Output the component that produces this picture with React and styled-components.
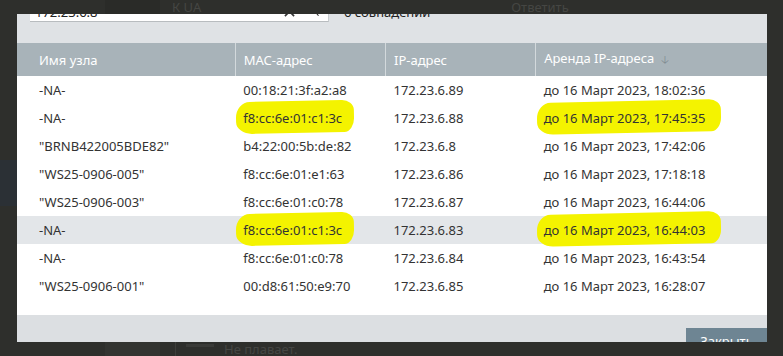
import React from "react";
import styled, { createGlobalStyle } from "styled-components";

const Global = createGlobalStyle`
  html, body { margin: 0; padding: 0; background: #2e2f2c; }
  body { font-family: "Noto Sans", "Open Sans", sans-serif; }
`;

const rows = [
  { name: "-NA-", mac: "00:18:21:3f:a2:a8", ip: "172.23.6.89", lease: "до 16 Март 2023, 18:02:36" },
  { name: "-NA-", mac: "f8:cc:6e:01:c1:3c", ip: "172.23.6.88", lease: "до 16 Март 2023, 17:45:35", marked: true },
  { name: "\"BRNB422005BDE82\"", mac: "b4:22:00:5b:de:82", ip: "172.23.6.8", lease: "до 16 Март 2023, 17:42:06" },
  { name: "\"WS25-0906-005\"", mac: "f8:cc:6e:01:e1:63", ip: "172.23.6.86", lease: "до 16 Март 2023, 17:18:18" },
  { name: "\"WS25-0906-003\"", mac: "f8:cc:6e:01:c0:78", ip: "172.23.6.87", lease: "до 16 Март 2023, 16:44:06" },
  { name: "-NA-", mac: "f8:cc:6e:01:c1:3c", ip: "172.23.6.83", lease: "до 16 Март 2023, 16:44:03", marked: true, active: true },
  { name: "-NA-", mac: "f8:cc:6e:01:c0:78", ip: "172.23.6.84", lease: "до 16 Март 2023, 16:43:54" },
  { name: "\"WS25-0906-001\"", mac: "00:d8:61:50:e9:70", ip: "172.23.6.85", lease: "до 16 Март 2023, 16:28:07" },
];

export default function App() {
  return (
    <>
      <Global />
      <Page>
        <TopStrip>
          <GhostBlock $left={105} />
          <GhostText $left={12}>К UA</GhostText>
          <GhostText $left={310}>Ответить</GhostText>
        </TopStrip>
        <Middle>
          <Gutter>
            <GutterPanel />
          </Gutter>
          <Modal>
            <Toolbar>
              <Search>
                <SearchText>172.23.6.8</SearchText>
                <ClearIcon viewBox="0 0 12 12">
                  <path d="M1 1 L11 11 M11 1 L1 11" stroke="#333" strokeWidth="1.8" />
                </ClearIcon>
                <PrevIcon viewBox="0 0 8 12">
                  <path d="M6 1 L2 6 L6 11" stroke="#333" strokeWidth="1.5" fill="none" />
                </PrevIcon>
              </Search>
              <Matches>6 совпадений</Matches>
            </Toolbar>
            <Table>
              <thead>
                <tr>
                  <Th $first>Имя узла</Th>
                  <Th>MAC-адрес</Th>
                  <Th>IP-адрес</Th>
                  <Th $last>
                    Аренда IP-адреса <SortArrow>🡣</SortArrow>
                  </Th>
                </tr>
              </thead>
              <tbody>
                {rows.map((r, i) => (
                  <Tr key={i} $active={r.active}>
                    <Td $first>{r.name}</Td>
                    <Td>{r.marked ? <Mark $w={118}>{r.mac}</Mark> : r.mac}</Td>
                    <Td>{r.ip}</Td>
                    <Td>{r.marked ? <Mark $w={184}>{r.lease}</Mark> : r.lease}</Td>
                  </Tr>
                ))}
              </tbody>
            </Table>
            <Spacer />
            <Footer>
              <CloseButton>Закрыть</CloseButton>
            </Footer>
          </Modal>
          <Gutter />
        </Middle>
        <BottomStrip>
          <GhostBlock $left={105} $dark />
          <Divider />
          <GhostLine />
          <GhostText $left={0}>Не плавает.</GhostText>
        </BottomStrip>
      </Page>
    </>
  );
}

const Page = styled.div`
  width: 783px;
  height: 356px;
  overflow: hidden;
  background: #2e2f2c;
  display: grid;
  grid-template-rows: 14px 328px 14px;
`;

const TopStrip = styled.div`
  display: flex;
  align-items: flex-end;
  overflow: hidden;
`;

const GhostBlock = styled.div`
  width: 55px;
  height: 14px;
  flex: none;
  background: ${(p) => (p.$dark ? "#333431" : "#2a2b28")};
  margin-left: ${(p) => p.$left}px;
`;

const GhostText = styled.span`
  font-size: 13px;
  color: #454643;
  line-height: 14px;
  white-space: nowrap;
  margin-left: ${(p) => p.$left}px;
`;

const Middle = styled.div`
  display: grid;
  grid-template-columns: 17px 750px 16px;
`;

const Gutter = styled.div`
  display: flex;
  flex-direction: column;
  padding-top: 146px;
`;

const GutterPanel = styled.div`
  height: 46px;
  background: #2b3035;
`;

const Modal = styled.div`
  background: #fff;
  display: flex;
  flex-direction: column;
  overflow: hidden;
`;

const Toolbar = styled.div`
  height: 29px;
  flex: none;
  background: #dfe2e5;
  display: flex;
  align-items: flex-start;
  padding-left: 13px;
  overflow: hidden;
`;

const Search = styled.div`
  width: 299px;
  height: 20px;
  margin-top: -12px;
  background: #fff;
  border-bottom: 1px solid #b8bcbf;
  border-right: 1px solid #c8cccf;
  display: flex;
  align-items: center;
  padding-left: 5px;
  box-sizing: border-box;
  font-size: 13px;
  color: #222;
`;

const SearchText = styled.span`
  flex: 1;
  line-height: 20px;
`;

const ClearIcon = styled.svg`
  width: 11px;
  height: 11px;
  margin-right: 19px;
`;

const PrevIcon = styled.svg`
  width: 6px;
  height: 10px;
  margin-right: 8px;
`;

const Matches = styled.span`
  margin-left: 15px;
  margin-top: -12px;
  font-size: 13px;
  line-height: 20px;
  color: #222;
`;

const Table = styled.table`
  width: 750px;
  border-collapse: collapse;
  table-layout: fixed;
  font-size: 13px;
  color: #333;
  flex: none;
`;

const Th = styled.th`
  height: 33px;
  padding: 0 0 0 ${(p) => (p.$first ? "22px" : "8px")};
  width: ${(p) => (p.$first ? "218px" : p.$last ? "231px" : "150px")};
  box-sizing: border-box;
  background: #a8b3b9;
  color: #fff;
  font-weight: normal;
  text-align: left;
  border-left: ${(p) => (p.$first ? "none" : "1px solid #d3d9dc")};
`;

const SortArrow = styled.span`
  color: #7f8a90;
  font-size: 11px;
  margin-left: 3px;
`;

const Tr = styled.tr`
  background: ${(p) => (p.$active ? "#e3e6e9" : "#fff")};
`;

const Td = styled.td`
  height: 28px;
  padding: 0 0 0 ${(p) => (p.$first ? "22px" : "8px")};
  white-space: nowrap;
`;

const Mark = styled.span`
  position: relative;
  display: inline-block;
  z-index: 0;
  &::before {
    content: "";
    position: absolute;
    z-index: -1;
    left: -7px;
    top: -8px;
    width: ${(p) => p.$w}px;
    height: 32px;
    background: #f4f300;
    border-radius: 14px 12px 10px 16px / 16px 10px 14px 12px;
    transform: rotate(-1.2deg);
  }
`;

const Spacer = styled.div`
  height: 15px;
  flex: none;
`;

const Footer = styled.div`
  flex: 1;
  background: #dcdfe2;
  display: flex;
  justify-content: flex-end;
  align-items: flex-start;
  overflow: hidden;
`;

const CloseButton = styled.div`
  margin-top: 13px;
  width: 81px;
  height: 30px;
  background: #6e8593;
  color: #fff;
  font-size: 13px;
  line-height: 26px;
  text-align: center;
`;

const BottomStrip = styled.div`
  display: flex;
  align-items: flex-start;
  overflow: hidden;
`;

const Divider = styled.div`
  width: 1px;
  height: 14px;
  background: #3d3e3b;
  margin-left: 15px;
`;

const GhostLine = styled.div`
  width: 28px;
  height: 3px;
  margin: 2px 10px 0 10px;
  background: #3a3b38;
`;
